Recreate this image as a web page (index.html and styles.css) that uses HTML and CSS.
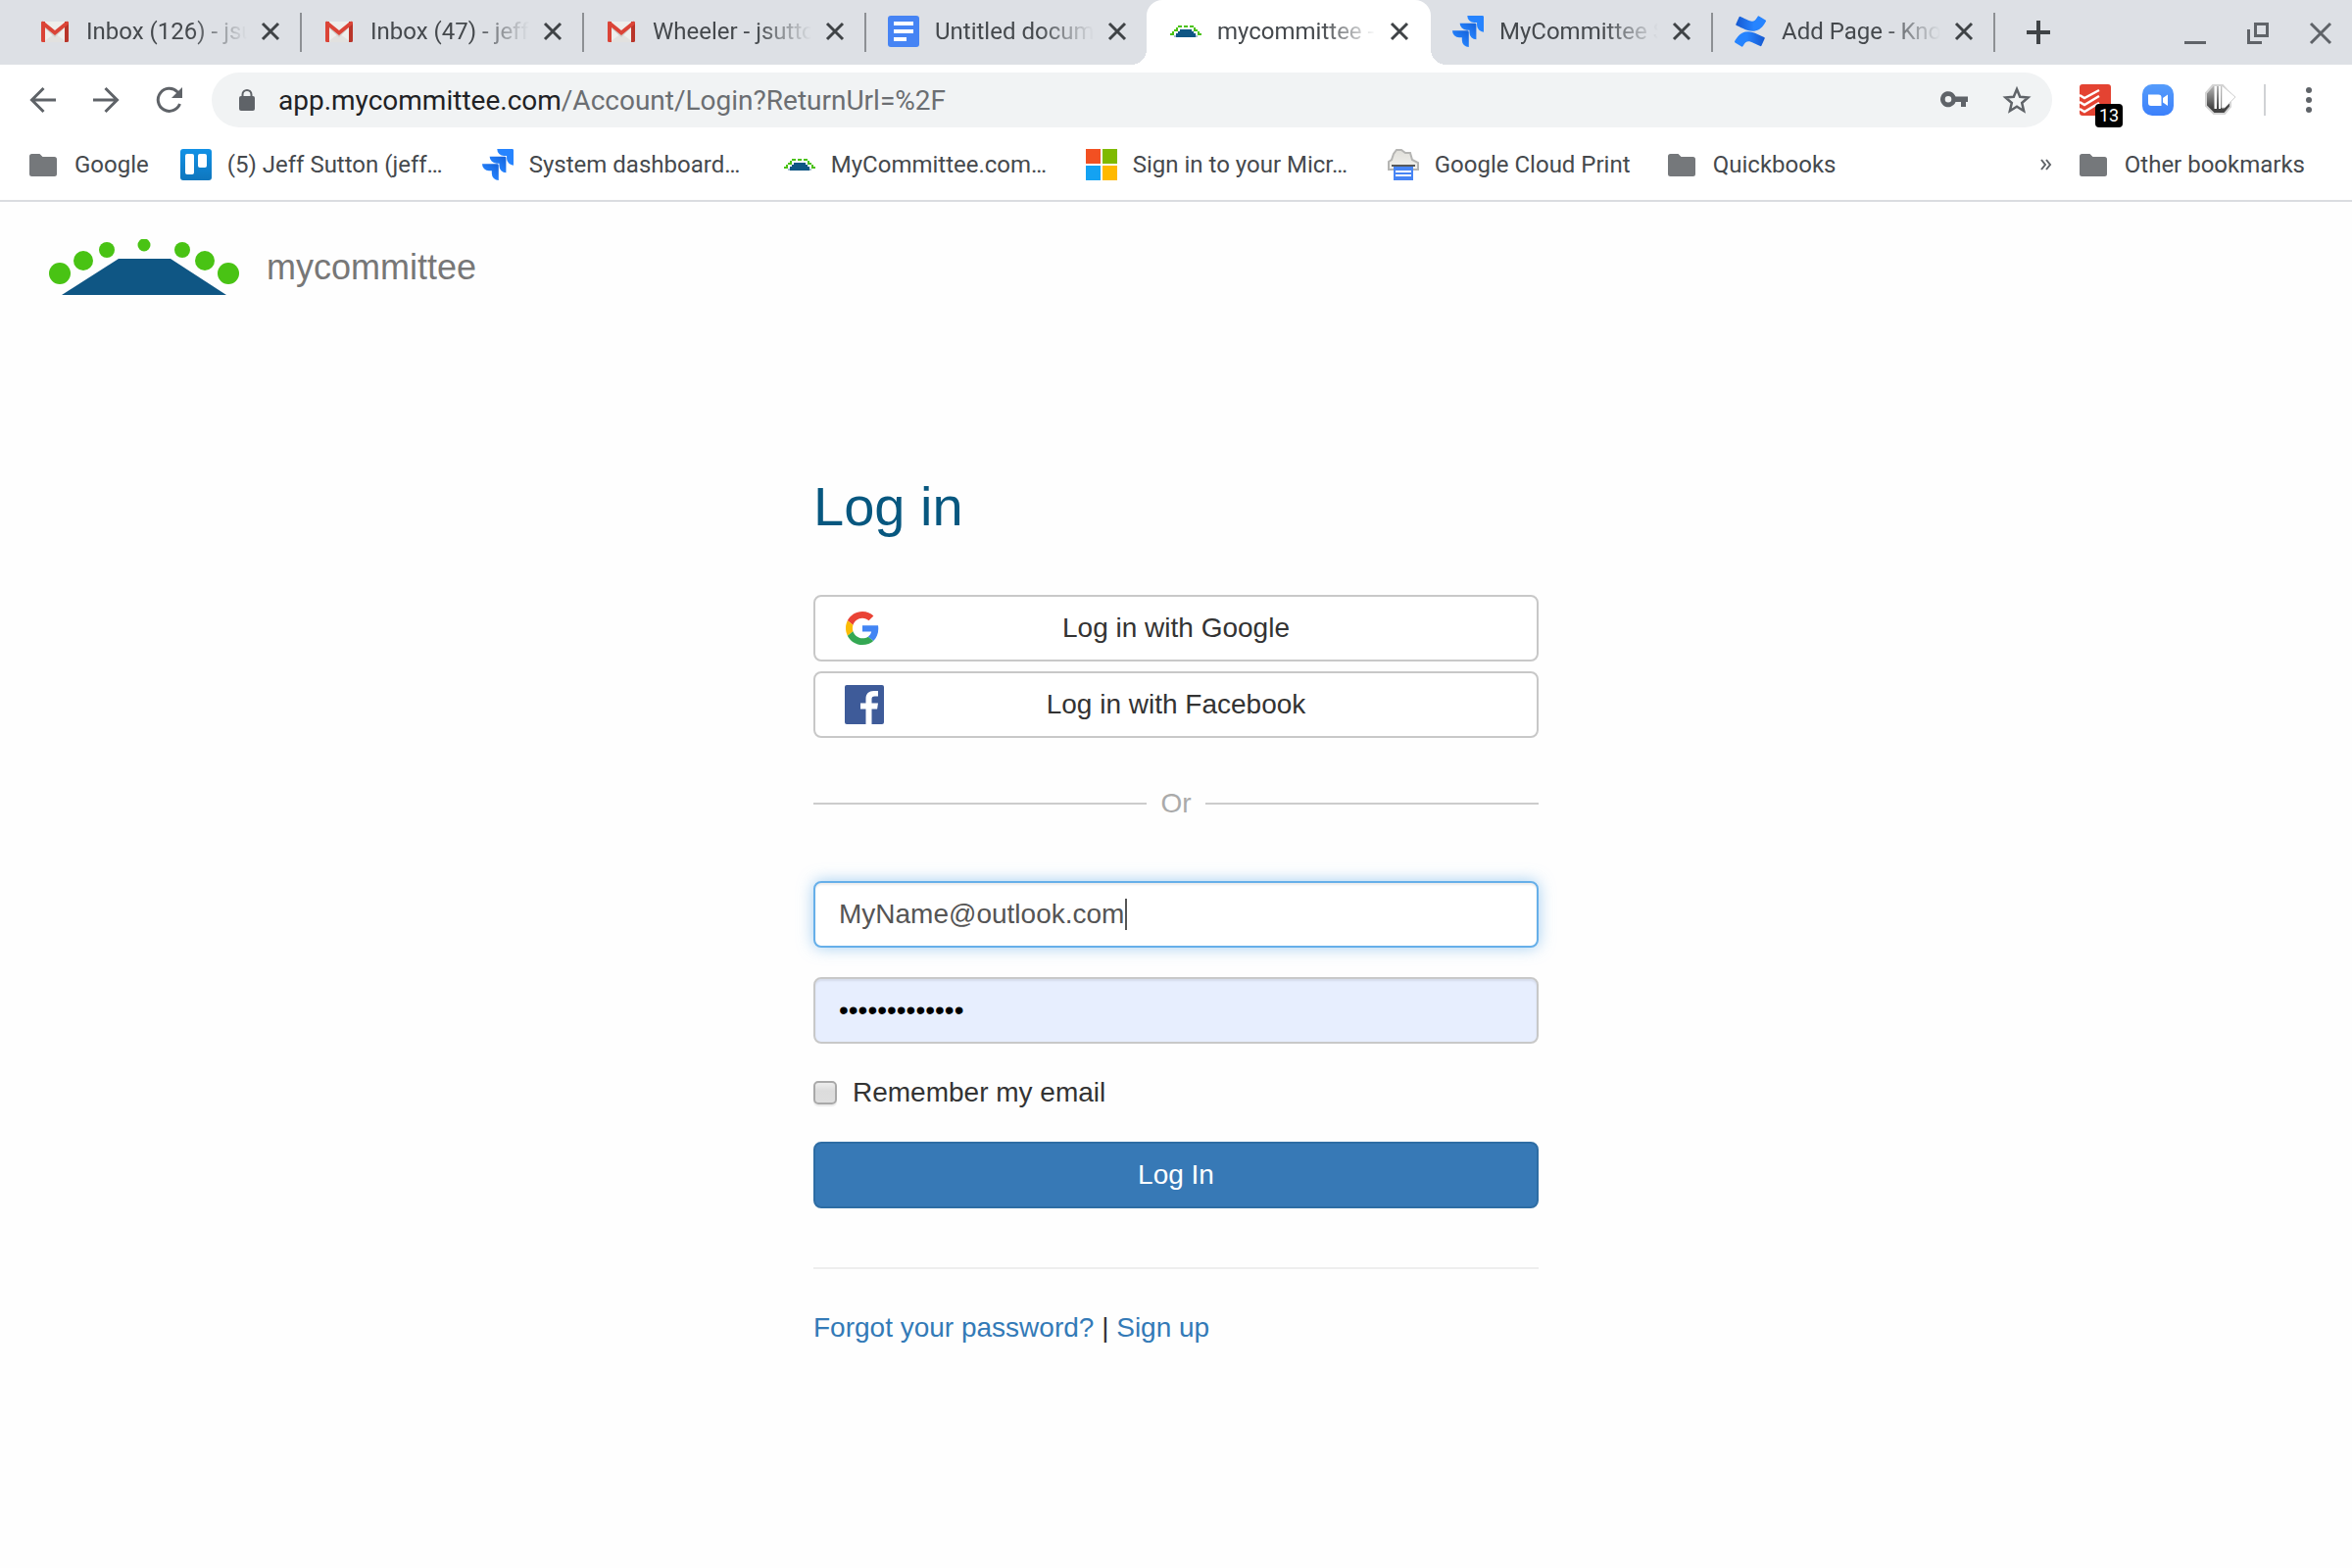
FILE: index.html
```html
<!DOCTYPE html>
<html lang="en">
<head>
<meta charset="utf-8">
<title>mycommittee - Log in</title>
<link rel="stylesheet" href="styles.css">
</head>
<body>
<svg class="defs" aria-hidden="true">
  <defs>
    <linearGradient id="jira-shade" x1="1" y1="0" x2="0.4" y2="0.7"><stop offset="0.2" stop-color="#1868e0"/><stop offset="1" stop-color="#2684ff"/></linearGradient>
    <linearGradient id="conf-shade" x1="0" y1="0" x2="1" y2="0"><stop offset="0" stop-color="#1558cf"/><stop offset="0.6" stop-color="#2684ff"/></linearGradient>
    <linearGradient id="conf-shade-low" x1="0" y1="0" x2="1" y2="0"><stop offset="0.4" stop-color="#2684ff"/><stop offset="1" stop-color="#1558cf"/></linearGradient>
    <linearGradient id="trello-shade" x1="0" y1="0" x2="0" y2="1"><stop offset="0" stop-color="#1292e6"/><stop offset="1" stop-color="#0f76bd"/></linearGradient>
    <linearGradient id="zoom-shade" x1="0" y1="0" x2="0" y2="1"><stop offset="0" stop-color="#559cfb"/><stop offset="1" stop-color="#3c80fb"/></linearGradient>
    <linearGradient id="stop-shade" x1="0" y1="0" x2="0" y2="1"><stop offset="0" stop-color="#b9b9b9"/><stop offset="0.8" stop-color="#444"/></linearGradient>
    <linearGradient id="cloud-shade" x1="0" y1="0" x2="0" y2="1"><stop offset="0" stop-color="#e0dfda"/><stop offset="1" stop-color="#f3f2ee"/></linearGradient>
    <symbol id="gmail" viewBox="0 0 32 32">
      <path d="M4 6h24v21H4z" fill="#eeeeec"/><path d="M4 27l12-9 12 9z" fill="#e2e1df"/><path d="M6 8l10 9 10-9v4L16 22 6 13z" fill="#cfccc9"/>
      <path d="M2 7.500q0-1.500 1.500-1.500H6v21H3.500Q2 27 2 25.500z" fill="#db4437"/><path d="M26 6h2.500Q30 6 30 7.500v18q0 1.500-1.500 1.500H26z" fill="#b9352a"/>
      <path d="M2 7.500C2 5.500 4 5.300 5.500 6.500L16 15 26.500 6.500C28 5.300 30 5.500 30 7.500L29.500 9 16 20 2.500 9z" fill="#db4437"/>
    </symbol>
    <symbol id="docs" viewBox="0 0 32 32"><rect width="32" height="32" rx="3" fill="#4684f4"/><path d="M6 6h20v4H6zM6 14h20v4H6zM6 22h13v4H6z" fill="#fff"/></symbol>
    <symbol id="committee" viewBox="0 0 16 16" shape-rendering="crispEdges">
      <path d="M4 5h2v1H4zM7 5h2v1H7zM10 5h2v1h-2zM3 6h1v1H3zM12 6h1v1h-1zM2 7h2v1H2zM12 7h2v1h-2zM1 8h1v1H1zM14 8h1v1h-1zM0 9h2v1H0zM14 9h2v1h-2z" fill="#4bc213"/>
      <path d="M4 8h8v1h1v1h1v1H2v-1h1V9h1z" fill="#a9c1d2"/>
      <path d="M5 7h6v1h1v1h1v2H3V9h1V8h1z" fill="#0f5684"/>
    </symbol>
    <symbol id="jira" viewBox="0 0 24 24"><path fill="url(#jira-shade)" d="M11.571 11.513H0a5.218 5.218 0 0 0 5.232 5.215h2.130v2.057A5.215 5.215 0 0 0 12.575 24V12.518a1.005 1.005 0 0 0-1.005-1.005z"/><path fill="url(#jira-shade)" d="M17.294 5.757H5.736a5.215 5.215 0 0 0 5.215 5.214h2.129v2.058a5.218 5.218 0 0 0 5.215 5.214V6.758a1.001 1.001 0 0 0-1.001-1.001z"/><path fill="#2684ff" d="M23.013 0H11.455a5.215 5.215 0 0 0 5.215 5.215h2.129v2.057A5.215 5.215 0 0 0 24 12.483V1.005A1.001 1.001 0 0 0 23.013 0z"/></symbol>
    <symbol id="confluence" viewBox="0 0 24 24"><path fill="url(#conf-shade-low)" d="M.87 18.257c-.248.382-.53.875-.763 1.245a.764.764 0 0 0 .255 1.040l4.965 3.054a.764.764 0 0 0 1.058-.26c.199-.332.454-.763.733-1.221 1.967-3.247 3.945-2.853 7.508-1.146l4.957 2.337a.764.764 0 0 0 1.028-.382l2.364-5.346a.764.764 0 0 0-.382-1 599.851 599.851 0 0 1-4.965-2.361C10.911 10.970 5.224 11.185.87 18.257z"/><path fill="url(#conf-shade)" d="M23.131 5.743c.249-.405.531-.875.764-1.250a.764.764 0 0 0-.256-1.034L18.675.404a.764.764 0 0 0-1.058.26c-.195.335-.451.763-.734 1.225-1.966 3.246-3.945 2.850-7.508 1.146L4.437.694a.764.764 0 0 0-1.027.382L1.046 6.422a.764.764 0 0 0 .382 1c1.039.49 3.105 1.467 4.965 2.361 6.698 3.246 12.392 3.029 16.738-4.040z"/></symbol>
    <symbol id="folder" viewBox="0 0 32 32"><path d="M4.500 5h8l3 3h12Q30 8 30 10.500v15Q30 28 27.500 28h-23Q2 28 2 25.500v-18Q2 5 4.500 5z" fill="#75787b"/></symbol>
    <symbol id="close" viewBox="0 0 24 24"><path d="M4 4l16 16M20 4L4 20" stroke="#3f4346" stroke-width="3" fill="none"/></symbol>
  </defs>
</svg>

<div class="browser">
  <nav class="tabs" aria-label="Tabs">
    <div class="tab"><svg class="icon"><use href="#gmail"/></svg><span class="tab-title">Inbox (126) - jsutton</span><button class="tab-close" aria-label="Close tab"><svg><use href="#close"/></svg></button></div>
    <div class="tab"><svg class="icon"><use href="#gmail"/></svg><span class="tab-title">Inbox (47) - jeffsutton</span><button class="tab-close" aria-label="Close tab"><svg><use href="#close"/></svg></button></div>
    <div class="tab"><svg class="icon"><use href="#gmail"/></svg><span class="tab-title">Wheeler - jsutton</span><button class="tab-close" aria-label="Close tab"><svg><use href="#close"/></svg></button></div>
    <div class="tab tab-before"><svg class="icon"><use href="#docs"/></svg><span class="tab-title">Untitled document</span><button class="tab-close" aria-label="Close tab"><svg><use href="#close"/></svg></button></div>
    <div class="tab tab-active"><svg class="icon"><use href="#committee"/></svg><span class="tab-title">mycommittee - Log in</span><button class="tab-close" aria-label="Close tab"><svg><use href="#close"/></svg></button></div>
    <div class="tab"><svg class="icon"><use href="#jira"/></svg><span class="tab-title">MyCommittee Support</span><button class="tab-close" aria-label="Close tab"><svg><use href="#close"/></svg></button></div>
    <div class="tab"><svg class="icon"><use href="#confluence"/></svg><span class="tab-title">Add Page - Knowledge</span><button class="tab-close" aria-label="Close tab"><svg><use href="#close"/></svg></button></div>
    <button class="icon-button new-tab" aria-label="New tab"><svg class="icon" viewBox="0 0 32 32"><path d="M16 4v24M4 16h24" stroke="#3f4346" stroke-width="4" fill="none"/></svg></button>
    <div class="window-buttons">
      <button class="icon-button" aria-label="Minimize"><svg class="icon" viewBox="0 0 32 32"><path d="M5 25h22v3H5z" fill="#5f6368"/></svg></button>
      <button class="icon-button" aria-label="Restore"><svg class="icon" viewBox="0 0 32 32"><path d="M13.500 7.500h12v12h-12zM6.500 13v13.500H20" stroke="#5f6368" stroke-width="3" fill="none"/></svg></button>
      <button class="icon-button" aria-label="Close"><svg class="icon" viewBox="0 0 32 32"><path d="M6 7l20 20M26 7L6 27" stroke="#5f6368" stroke-width="3" fill="none"/></svg></button>
    </div>
  </nav>

  <div class="toolbar">
    <button class="icon-button" aria-label="Back"><svg class="icon" viewBox="0 0 32 32"><path d="M29 16H5M16.500 4L4.500 16l12 12" stroke="#5f6368" stroke-width="3" fill="none"/></svg></button>
    <button class="icon-button" aria-label="Forward"><svg class="icon" viewBox="0 0 32 32"><path d="M3 16h24M15.500 4l12 12-12 12" stroke="#5f6368" stroke-width="3" fill="none"/></svg></button>
    <button class="icon-button" aria-label="Reload"><svg class="icon" viewBox="0 0 32 32"><path d="M27.500 20A11.500 11.500 0 1 1 25 7.800L27 11" stroke="#5f6368" stroke-width="3" fill="none"/><path d="M30 3v11H19z" fill="#5f6368"/></svg></button>
    <div class="omnibox">
      <svg class="lock" viewBox="0 0 16 22"><path d="M3.500 9V5.500a4.500 4.500 0 0 1 9 0V9" stroke="#5f6368" stroke-width="2" fill="none"/><rect y="7" width="16" height="15" rx="2" fill="#5f6368"/></svg>
      <span class="url"><span class="url-host">app.mycommittee.com</span>/Account/Login?ReturnUrl=%2F</span>
      <button class="icon-button" aria-label="Saved passwords"><svg class="icon" viewBox="0 0 32 32"><path d="M17.500 12.500A8 8 0 1 0 17.500 18H23v5h5v-5h2v-5.500zM10 12a3.300 3.300 0 1 1 0 6.600A3.300 3.300 0 0 1 10 12z" fill="#5f6368" fill-rule="evenodd"/></svg></button>
      <button class="icon-button" aria-label="Bookmark this page"><svg class="icon" viewBox="0 0 32 32"><path d="M16 5l3.200 7.800 8.300.7-6.300 5.500 1.900 8.200-7.100-4.400-7.100 4.400 1.900-8.200-6.300-5.500 8.300-.7z" stroke="#5f6368" stroke-width="2.500" fill="none"/></svg></button>
    </div>
    <div class="extensions">
      <button class="icon-button extension" aria-label="Todoist"><svg class="icon" viewBox="0 0 32 32"><rect width="32" height="32" rx="3" fill="#e44332"/><path d="M0 11l5 3L20 6M0 18l5 3 15-9M0 25l5 3 15-9" stroke="#fff" stroke-width="2.500" fill="none"/></svg><span class="badge">13</span></button>
      <button class="icon-button extension" aria-label="Zoom"><svg class="icon" viewBox="0 0 32 32"><rect width="32" height="32" rx="10" fill="url(#zoom-shade)"/><path d="M6 10.500h10.500q3 0 3 3V22H9q-3 0-3-3zM21 14l5-3.500v11.500L21 18.500z" fill="#fff"/></svg></button>
      <button class="icon-button extension" aria-label="Stop"><svg class="icon" viewBox="0 0 32 32"><path d="M8 1h10l8 9v13l-6 7H9L1 22V9z" fill="url(#stop-shade)" stroke="#d4d4d4" stroke-width="2"/><path d="M17 1l14 12-11 11h-3z" fill="#fff" stroke="#d0d0d0"/><path d="M9.500 2H12v23H9.500zM14 2h2v23h-2z" fill="#fff"/></svg></button>
      <span class="divider"></span>
      <button class="icon-button" aria-label="Menu"><svg class="icon" viewBox="0 0 32 32"><g fill="#5f6368"><circle cx="16" cy="6" r="3"/><circle cx="16" cy="16" r="3"/><circle cx="16" cy="26" r="3"/></g></svg></button>
    </div>
  </div>

  <nav class="bookmarks" aria-label="Bookmarks">
    <a class="bookmark" href="#"><svg class="icon"><use href="#folder"/></svg>Google</a>
    <a class="bookmark bookmark-full" href="#"><svg class="icon" viewBox="0 0 32 32"><rect width="32" height="32" rx="3" fill="url(#trello-shade)"/><rect x="5" y="5" width="9" height="21" rx="2" fill="#fff"/><rect x="18" y="5" width="9" height="14" rx="2" fill="#fff"/></svg>(5) Jeff Sutton (jeff…</a>
    <a class="bookmark bookmark-full" href="#"><svg class="icon"><use href="#jira"/></svg>System dashboard…</a>
    <a class="bookmark bookmark-full" href="#"><svg class="icon"><use href="#committee"/></svg>MyCommittee.com…</a>
    <a class="bookmark bookmark-full" href="#"><svg class="icon" viewBox="0 0 32 32"><path d="M0 0h15v15H0z" fill="#f25022"/><path d="M17 0h15v15H17z" fill="#7fba00"/><path d="M0 17h15v15H0z" fill="#14a2f2"/><path d="M17 17h15v15H17z" fill="#ffb900"/></svg>Sign in to your Micr…</a>
    <a class="bookmark bookmark-print" href="#"><svg class="icon" viewBox="0 0 32 32"><path d="M1 21V13l3-2 2-6 3-4h5l4 3h5l2 7 6 3v7z" fill="url(#cloud-shade)" stroke="#b5b5b3" stroke-width="2"/><path d="M4 16h24v2H4z" fill="#55585a"/><path d="M6 18h20v14H6z" fill="#4684f4"/><path d="M8 22h16v2H8zM8 26h16v2H8z" fill="#fff"/></svg>Google Cloud Print</a>
    <a class="bookmark" href="#"><svg class="icon"><use href="#folder"/></svg>Quickbooks</a>
    <div class="bookmarks-end">
      <button class="icon-button overflow" aria-label="More bookmarks"><svg viewBox="0 0 12 12"><path d="M1 1l4 5-4 5M6 1l4 5-4 5" stroke="#5f6368" stroke-width="2" fill="none"/></svg></button>
      <a class="bookmark" href="#"><svg class="icon"><use href="#folder"/></svg>Other bookmarks</a>
    </div>
  </nav>
</div>

<header class="site-header">
  <a class="brand" href="#">
    <svg class="logo" viewBox="0 2 200 58"><g fill="#49c314"><circle cx="13" cy="37" r="11"/><circle cx="37" cy="24" r="10"/><circle cx="61" cy="13" r="8"/><circle cx="99" cy="8" r="6.500"/><circle cx="138" cy="13" r="8"/><circle cx="161" cy="24" r="10"/><circle cx="185" cy="37" r="11"/></g><path d="M73 22h53l57 37H15z" fill="#0f5684"/></svg>
    mycommittee
  </a>
</header>

<main class="login">
  <h1 class="login-title">Log in</h1>
  <div class="social">
    <button class="button button-social"><svg class="social-icon" viewBox="0 0 40 40"><g transform="translate(1 3) scale(.70833)"><path fill="#ea4335" d="M24 9.500c3.540 0 6.710 1.220 9.210 3.600l6.850-6.850C35.900 2.380 30.470 0 24 0 14.620 0 6.510 5.380 2.560 13.220l7.980 6.190C12.430 13.720 17.740 9.500 24 9.500z"/><path fill="#4285f4" d="M46.980 24.550c0-1.570-.15-3.090-.38-4.550H24v9.020h12.940c-.58 2.960-2.260 5.480-4.780 7.180l7.730 6c4.510-4.180 7.090-10.360 7.090-17.650z"/><path fill="#fbbc05" d="M10.530 28.590c-.48-1.450-.76-2.990-.76-4.590s.27-3.140.76-4.590l-7.980-6.190C.92 16.460 0 20.120 0 24c0 3.880.92 7.540 2.560 10.780l7.970-6.190z"/><path fill="#34a853" d="M24 48c6.480 0 11.930-2.130 15.890-5.810l-7.730-6c-2.150 1.450-4.920 2.300-8.160 2.300-6.260 0-11.570-4.220-13.470-9.910l-7.980 6.190C6.510 42.620 14.620 48 24 48z"/></g></svg>Log in with Google</button>
    <button class="button button-social"><svg class="social-icon" viewBox="0 0 40 40"><rect width="40" height="40" rx="2" fill="#3e5b99"/><path d="M21.500 40V24.500H16V18.500h5.500V14c0-5.200 3.200-8 8-8H34v5.500h-3.300c-2.600 0-3.200 1.200-3.200 3v4H34l-.9 6h-5.600V40z" fill="#fff"/></svg>Log in with Facebook</button>
  </div>
  <div class="or">Or</div>
  <form class="form">
    <div class="field">
      <input class="input input-focused" type="email" aria-label="Email" value="MyName@outlook.com">
      <span class="caret"></span>
    </div>
    <input class="input input-filled" type="password" aria-label="Password" value="aaaaaaaaaaaaa">
    <label class="remember"><input class="checkbox" type="checkbox">Remember my email</label>
    <button class="button button-primary" type="button">Log In</button>
  </form>
  <p class="links"><a href="#">Forgot your password?</a> | <a href="#">Sign up</a></p>
</main>
</body>
</html>
```
FILE: styles.css
```css
* {
  box-sizing: border-box;
}

body {
  margin: 0;
  background: #fefefe;
  color: #333;
  font: 28px/40px "Liberation Sans", Arial, sans-serif;
}

button {
  margin: 0;
  padding: 0;
  border: 0;
  background: none;
  font: inherit;
  color: inherit;
}

a {
  color: #337ab7;
  text-decoration: none;
}

svg {
  display: block;
  flex: none;
}

.defs {
  position: absolute;
  width: 0;
  height: 0;
}

/* Browser chrome */

.browser {
  border-bottom: 2px solid #dadce0;
  background: #fff;
  color: #45494d;
  font: 24px/32px Roboto, sans-serif;
}

.icon {
  width: 32px;
  height: 32px;
}

.icon-button {
  display: block;
  flex: none;
}

.tabs {
  display: flex;
  align-items: center;
  height: 66px;
  padding: 0 16px 0 18px;
  background: #dde0e5;
}

.tab {
  position: relative;
  display: flex;
  flex: 0 1 288px;
  align-items: center;
  min-width: 0;
  height: 66px;
  padding: 0 20px 2px 22px;
}

.tab:first-child {
  flex-basis: 290px;
}

.tab::after {
  content: "";
  position: absolute;
  top: 13px;
  right: 0;
  width: 2px;
  height: 40px;
  background: #8d9094;
}

.tab-before::after {
  content: none;
}

.tab-title {
  flex: 1;
  min-width: 0;
  margin: 0 12px 0 16px;
  overflow: hidden;
  white-space: nowrap;
  mask-image: linear-gradient(to left, transparent, #000 56px);
}

.tab-close,
.tab-close svg {
  display: block;
  width: 24px;
  height: 24px;
}

.tab-active {
  flex-basis: 290px;
  margin-left: -2px;
  padding-left: 24px;
  border-radius: 16px 16px 0 0;
  background: #fff;
}

.tab-active::before,
.tab-active::after {
  content: "";
  position: absolute;
  top: auto;
  bottom: 0;
  width: 16px;
  height: 16px;
}

.tab-active::before {
  right: 100%;
  background: radial-gradient(circle at 0 0, transparent 16px, #fff 16px);
}

.tab-active::after {
  right: auto;
  left: 100%;
  background: radial-gradient(circle at 100% 0, transparent 16px, #fff 16px);
}

.new-tab {
  margin-left: 28px;
}

.window-buttons {
  display: flex;
  gap: 32px;
  margin-left: auto;
}

.toolbar {
  display: flex;
  align-items: center;
  gap: 32px;
  padding: 8px 28px;
}

.omnibox {
  display: flex;
  flex: 1;
  align-items: center;
  gap: 32px;
  height: 56px;
  margin: 0 -4px;
  padding: 0 20px 0 28px;
  border-radius: 28px;
  background: #f1f3f4;
}

.lock {
  width: 16px;
  height: 22px;
}

.url {
  flex: 1;
  min-width: 0;
  overflow: hidden;
  margin-left: -8px;
  padding-top: 2px;
  color: #6b6e72;
  font-size: 28px;
  white-space: nowrap;
}

.url-host {
  color: #202124;
}

.extensions {
  display: flex;
  align-items: center;
  gap: 32px;
}

.extension {
  position: relative;
}

.badge {
  position: absolute;
  top: 20px;
  left: 16px;
  width: 28px;
  height: 24px;
  border-radius: 4px;
  background: #000;
  color: #fff;
  font-size: 18px;
  line-height: 24px;
  text-align: center;
}

.divider {
  width: 2px;
  height: 32px;
  margin: 0 -4px;
  background: #d0d2d5;
}

.bookmarks {
  display: flex;
  align-items: center;
  gap: 32px;
  padding: 14px 48px 20px 28px;
}

.bookmark {
  display: flex;
  flex: none;
  align-items: center;
  gap: 16px;
  color: #45494d;
  white-space: nowrap;
}

.bookmark-full {
  width: 276px;
}

.bookmark-print {
  width: 252px;
}

.bookmarks-end {
  display: flex;
  align-items: center;
  gap: 26px;
  margin-left: auto;
}

.overflow svg {
  width: 12px;
  height: 12px;
}

/* Site header */

.site-header {
  padding: 38px 48px 36px;
}

.brand {
  display: flex;
  align-items: center;
  gap: 24px;
  width: max-content;
  color: #777;
  font-size: 36px;
  line-height: 56px;
}

.logo {
  width: 200px;
  height: 58px;
}

/* Login form */

.login {
  max-width: 740px;
  margin: 0 auto;
  padding: 149px 0 60px;
}

.login-title {
  margin: 0 0 60px;
  color: #07577f;
  font-size: 56px;
  font-weight: 400;
  line-height: 60px;
}

.social {
  display: grid;
  gap: 10px;
}

.button {
  display: block;
  position: relative;
  width: 100%;
  height: 68px;
  border: 2px solid #c8c8c8;
  border-radius: 8px;
  text-align: center;
}

.button-social {
  background: #fff;
}

.social-icon {
  position: absolute;
  top: 12px;
  left: 30px;
  width: 40px;
  height: 40px;
}

.or {
  display: flex;
  align-items: center;
  margin: 47px 0 59px;
  color: #aaa;
}

.or::before,
.or::after {
  content: "";
  flex: 1;
  height: 2px;
  background: #ccc;
}

.or::before {
  margin-right: 14px;
}

.or::after {
  margin-left: 14px;
}

.form {
  display: grid;
  gap: 30px;
  padding-bottom: 60px;
  border-bottom: 2px solid #eee;
}

.field {
  position: relative;
}

.input {
  display: block;
  width: 100%;
  height: 68px;
  padding: 0 24px;
  border: 2px solid #c8c8c8;
  border-radius: 8px;
  background: #fff;
  box-shadow: inset 0 2px 2px rgba(0, 0, 0, 0.075);
  color: #555;
  font: inherit;
  outline: 0;
}

.input-focused {
  border-color: #66afe9;
  box-shadow: inset 0 2px 2px rgba(0, 0, 0, 0.075), 0 0 16px rgba(102, 175, 233, 0.6);
}

.input-filled {
  background: #e7eefe;
  color: #000;
}

.caret {
  position: absolute;
  top: 18px;
  left: 318px;
  width: 2px;
  height: 32px;
  background: #555;
}

.remember {
  display: flex;
  align-items: center;
  gap: 16px;
}

.checkbox {
  width: 24px;
  height: 24px;
  margin: 0;
  border: 2px solid #a9a9a9;
  border-radius: 5px;
  background: linear-gradient(#ededed, #dcdcdc 40%, #dedede);
  box-shadow: 0 2px 1px rgba(0, 0, 0, 0.08);
  appearance: none;
}

.button-primary {
  border-color: #2e6da4;
  background: #3779b6;
  color: #fff;
}

.links {
  margin: 40px 0 0;
}
```
